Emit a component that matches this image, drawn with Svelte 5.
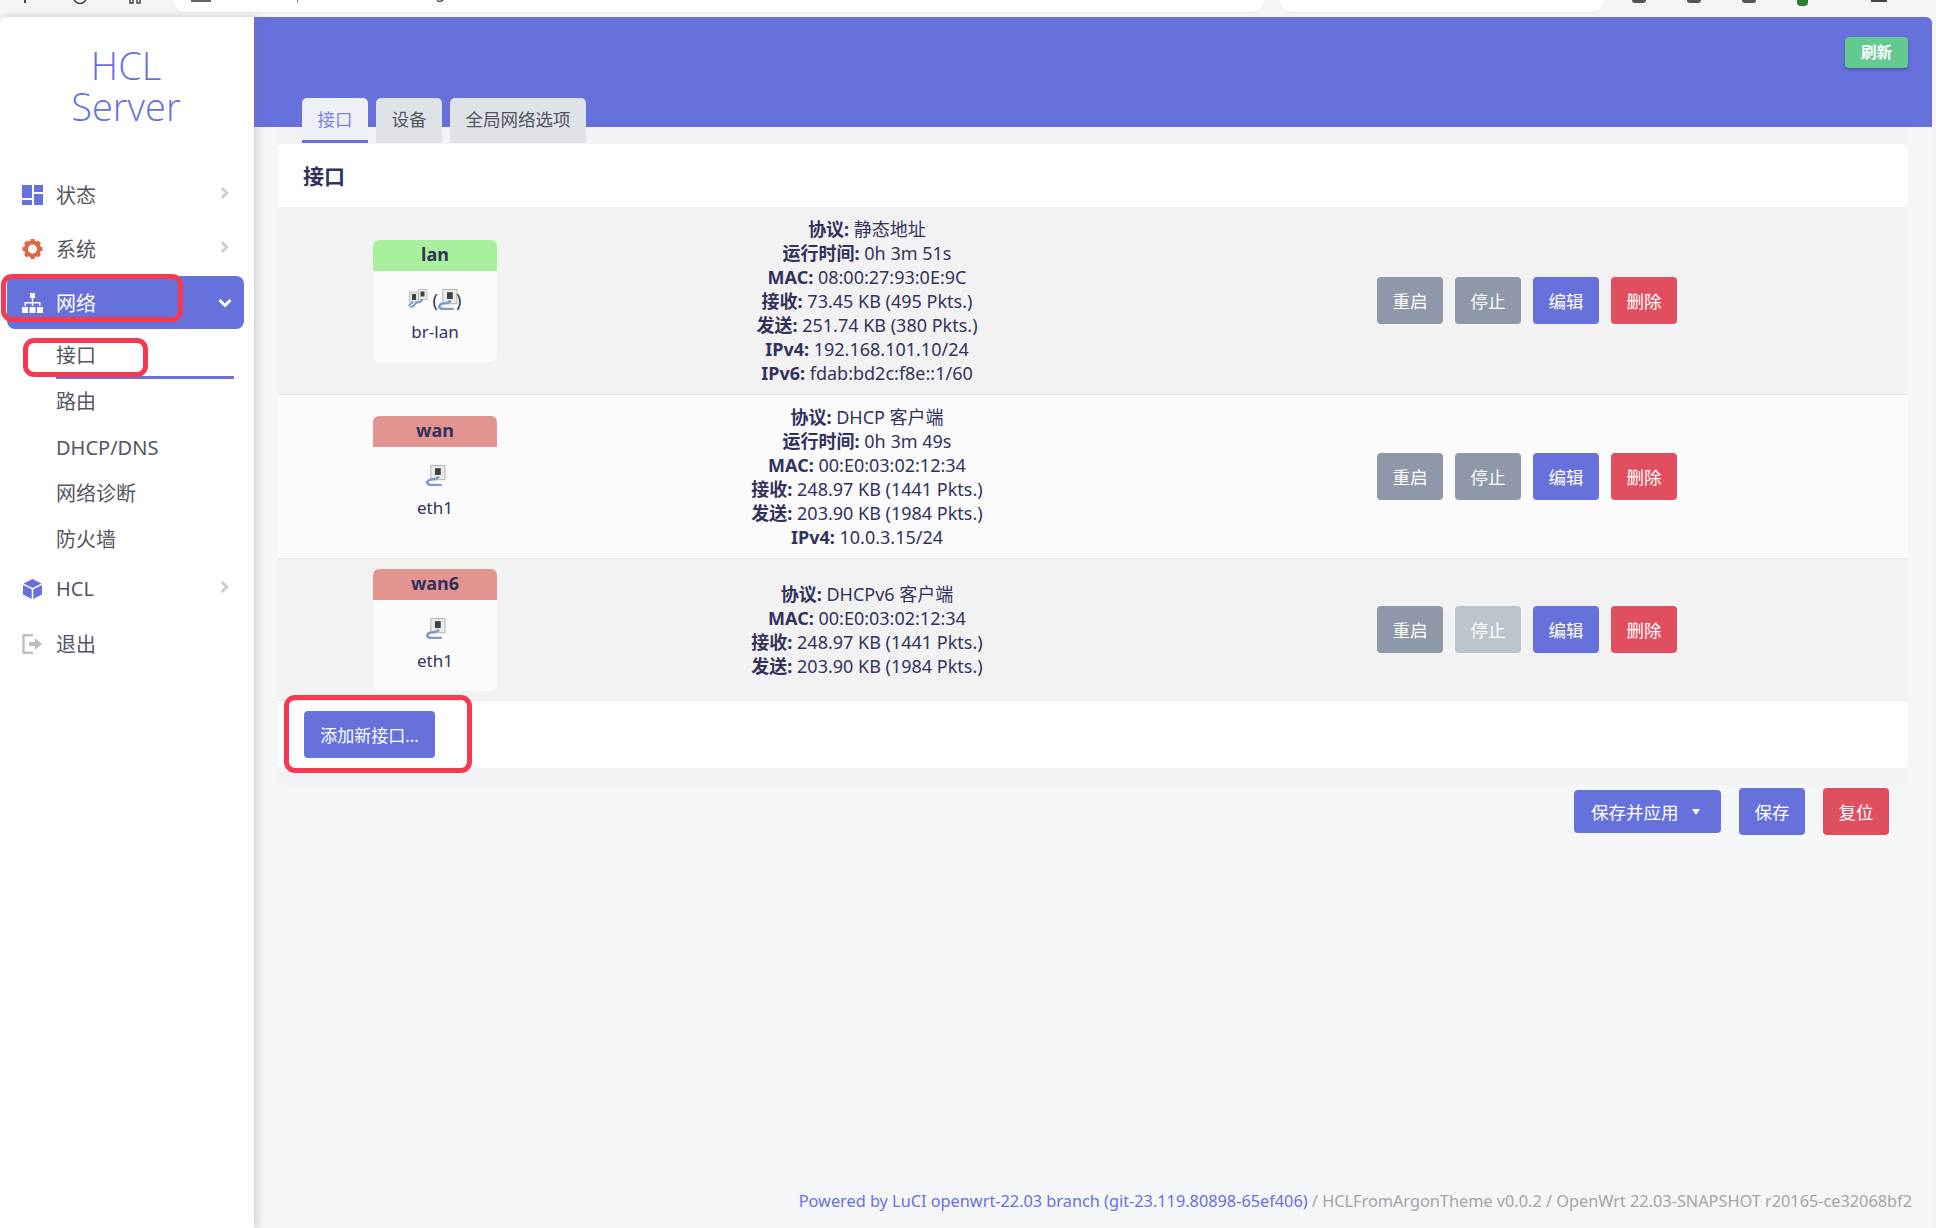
<script>
  const rows = [
    { name: 'lan', state: 'up', dev: 'br-lan', bridge: true, stopOff: false, info: [['协议:', '静态地址'], ['运行时间:', '0h 3m 51s'], ['MAC:', '08:00:27:93:0E:9C'], ['接收:', '73.45 KB (495 Pkts.)'], ['发送:', '251.74 KB (380 Pkts.)'], ['IPv4:', '192.168.101.10/24'], ['IPv6:', 'fdab:bd2c:f8e::1/60']] },
    { name: 'wan', state: 'down', dev: 'eth1', bridge: false, stopOff: false, info: [['协议:', 'DHCP 客户端'], ['运行时间:', '0h 3m 49s'], ['MAC:', '00:E0:03:02:12:34'], ['接收:', '248.97 KB (1441 Pkts.)'], ['发送:', '203.90 KB (1984 Pkts.)'], ['IPv4:', '10.0.3.15/24']] },
    { name: 'wan6', state: 'down', dev: 'eth1', bridge: false, stopOff: true, info: [['协议:', 'DHCPv6 客户端'], ['MAC:', '00:E0:03:02:12:34'], ['接收:', '248.97 KB (1441 Pkts.)'], ['发送:', '203.90 KB (1984 Pkts.)']] }
  ];
  const teeth = [0, 45, 90, 135, 180, 225, 270, 315];
  const subs = ['接口', '路由', 'DHCP/DNS', '网络诊断', '防火墙'];
</script>

{#snippet port()}
  <svg class="port" viewBox="0 0 20 20" aria-hidden="true">
    <rect x="5.500" y=".5" width="13.500" height="13.500" fill="#e9ece9" stroke="#b4b9b4" stroke-width="1" />
    <rect x="9.500" y="3" width="5.500" height="6.500" fill="#3f443f" />
    <path d="M13 11C11 15.500 6 12 3 15c-2 2 0 4 3 4h10" fill="none" stroke="#8199c9" stroke-width="2.400" />
  </svg>
{/snippet}

{#snippet pair()}
  <svg class="pair" viewBox="0 0 20 20" aria-hidden="true">
    <rect x="10" y=".5" width="9" height="10" fill="#e9ece9" stroke="#b4b9b4" stroke-width=".8" />
    <rect x="12.500" y="2.500" width="4" height="5" fill="#3f443f" />
    <rect x="1.500" y="3" width="9" height="10" fill="#dfe3df" stroke="#b4b9b4" stroke-width=".8" />
    <rect x="4" y="5" width="4" height="6" fill="#3f443f" />
    <path d="M14 10c0 5-5 2-7 5-1 3-4 3-5 3M5 13c-3 2-4 3-4 4" fill="none" stroke="#8199c9" stroke-width="2" />
  </svg>
{/snippet}

{#snippet chevron()}
  <svg class="chev" viewBox="0 0 10 14" aria-hidden="true"><path d="M2 1.500 7.500 7 2 12.500" fill="none" stroke="#c9cdd3" stroke-width="3" /></svg>
{/snippet}

<div class="app">
  <div class="chrome">
    <div class="tools">
      <svg class="tool" viewBox="0 0 20 20" aria-hidden="true"><path d="M10 0v3" stroke="#444" stroke-width="2" /></svg>
      <svg class="tool" viewBox="0 0 20 20" aria-hidden="true"><circle cx="10" cy="-3" r="6.500" fill="none" stroke="#444" stroke-width="1.500" /></svg>
      <svg class="tool" viewBox="0 0 20 20" aria-hidden="true"><path d="M5 0v3h3V0M12 0v3h3V0" fill="none" stroke="#444" stroke-width="1.500" /></svg>
    </div>
    <div class="addr">
      <span class="lock"></span>
      <span class="url-a">不安全</span><span class="pipe"></span><span class="url">192.168.101.10/cgi-bin/luci/admin/network/network</span>
    </div>
    <div class="search"><span>点击搜索</span></div>
    <div class="ext">
      <span class="dot"></span><span class="dot"></span><span class="dot"></span><span class="dot green"></span><span class="dash"></span>
    </div>
  </div>

  <div class="layout">
    <aside class="side">
      <div class="logo">HCL<br />Server</div>
      <nav>
        <div class="item">
          <svg class="ico" viewBox="0 0 21 20" aria-hidden="true"><path fill="#6771dc" d="M0 0h10v13H0zM12 0h9v7h-9zM0 15h10v5H0zM12 9h9v11h-9z" /></svg>
          <span>状态</span>{@render chevron()}
        </div>
        <div class="item">
          <svg class="ico" viewBox="0 0 21 20" aria-hidden="true">
            <circle cx="10.500" cy="10" r="6.500" fill="none" stroke="#e0673f" stroke-width="4" />
            {#each teeth as t}<rect x="8.500" y="0" width="4" height="4" fill="#e0673f" transform="rotate({t} 10.500 10)" />{/each}
          </svg>
          <span>系统</span>{@render chevron()}
        </div>
        <div class="item active">
          <svg class="ico" viewBox="0 0 21 20" aria-hidden="true"><path fill="#fff" d="M8 0h5v5H8zM9.800 5h1.400v4h7.300v4h-1.400v-2.600h-5.900V13H9.800v-2.600H3.900V13H2.500V9h7.300zM0 14h6v6H0zM7.500 14h6v6h-6zM15 14h6v6h-6z" /></svg>
          <span>网络</span>
          <svg class="chev down" viewBox="0 0 14 10" aria-hidden="true"><path d="M1.500 2 7 7.500 12.500 2" fill="none" stroke="#fff" stroke-width="3" /></svg>
        </div>
        <div class="subs">
          {#each subs as s, i}
            <div class="sub" class:current={i === 0}>{s}</div>
          {/each}
        </div>
        <div class="item">
          <svg class="ico" viewBox="0 0 21 20" aria-hidden="true"><path fill="#6771dc" d="M10.500 0 19.500 4.500 10.500 9 1.500 4.500zM1 6l8.700 4.300V20L1 15.500zM20 6v9.500L11.300 20v-9.700z" /></svg>
          <span>HCL</span>{@render chevron()}
        </div>
        <div class="item last">
          <svg class="ico" viewBox="0 0 21 20" aria-hidden="true"><path d="M11 1.200H1.500v17.600H11" fill="none" stroke="#b9c0c6" stroke-width="2.400" /><path d="M7 8h6V4l7 6-7 6v-4H7z" fill="#b9c0c6" /></svg>
          <span>退出</span>
        </div>
      </nav>
    </aside>

    <main class="main">
      <header class="hero"><button class="refresh">刷新</button></header>
      <div class="panel">
        <div class="tabs">
          <div class="tab on">接口</div>
          <div class="tab">设备</div>
          <div class="tab">全局网络选项</div>
        </div>
        <section class="card">
          <h3>接口</h3>
          {#each rows as r}
            <div class="row">
              <div class="dev-cell">
                <div class="dev">
                  <div class="dev-name {r.state}">{r.name}</div>
                  <div class="dev-body">
                    <div class="ports">
                      {#if r.bridge}
                        {@render pair()}<span class="paren">(</span>{@render port()}<span class="paren close">)</span>
                      {:else}
                        {@render port()}
                      {/if}
                    </div>
                    <div class="dev-label">{r.dev}</div>
                  </div>
                </div>
              </div>
              <div class="info">
                {#each r.info as l}
                  <div><b>{l[0]}</b> {l[1]}</div>
                {/each}
              </div>
              <div class="acts">
                <button class="btn gray">重启</button>
                <button class="btn gray" class:off={r.stopOff}>停止</button>
                <button class="btn blue">编辑</button>
                <button class="btn red">删除</button>
              </div>
            </div>
          {/each}
          <div class="add"><button class="btn blue wide">添加新接口...</button></div>
        </section>
      </div>
      <div class="page-acts">
        <button class="btn blue apply">保存并应用<i class="caret"></i></button>
        <button class="btn blue">保存</button>
        <button class="btn red">复位</button>
      </div>
      <footer class="foot"><span class="lnk">Powered by LuCI openwrt-22.03 branch (git-23.119.80898-65ef406)</span> / HCLFromArgonTheme v0.0.2 / OpenWrt 22.03-SNAPSHOT r20165-ce32068bf2</footer>
    </main>
    <div class="edge"></div>
  </div>

  <div class="mark m1"></div>
  <div class="mark m2"></div>
  <div class="mark m3"></div>
</div>

<style>
  :global(body) { margin: 0; background: #f5f5f5; }
  .app {
    position: relative;
    width: 1936px;
    height: 1228px;
    overflow: hidden;
    display: flex;
    flex-direction: column;
    font-family: "Noto Sans", "Noto Sans CJK SC", sans-serif;
    color: #32325d;
  }
  .chrome { height: 17px; flex: none; display: flex; overflow: hidden; background: #f5f5f5; }
  .tools { width: 173px; display: flex; gap: 35px; padding-left: 15px; box-sizing: border-box; }
  .tool { width: 20px; height: 20px; }
  .addr, .search { height: 12px; background: #fff; border-radius: 0 0 12px 12px; display: flex; align-items: flex-end; box-shadow: 0 1px 1px #e8e8e8; }
  .addr { width: 1091px; padding-left: 18px; box-sizing: border-box; font-size: 16px; line-height: 22px; white-space: nowrap; color: #444; }
  .addr > span { flex: none; height: 22px; transform: translateY(-9px); }
  .addr > .lock { width: 20px; background: #666; transform: translateY(-10px); }
  .url-a { margin-left: 14px; width: 62px; }
  .pipe { width: 1px; background: #888; margin: 0 10px 0 10px; }
  .search { width: 324px; margin-left: 16px; padding-left: 58px; box-sizing: border-box; font-size: 16px; color: #555; overflow: hidden; }
  .search span { transform: translateY(-9px); line-height: 22px; white-space: nowrap; }
  .ext { flex: 1; display: flex; gap: 41px; padding-left: 28px; }
  .dot { width: 14px; height: 3px; background: #555; border-radius: 0 0 4px 4px; }
  .dot.green { width: 11px; height: 6px; background: #2e7d32; }
  .dash { width: 16px; height: 2px; background: #444; margin-left: 22px; }

  .layout { flex: 1; display: flex; min-height: 0; }
  .side {
    width: 254px;
    flex: none;
    background: #fff;
    border-top-left-radius: 6px;
    box-shadow: 2px 0 8px rgba(110, 115, 130, .35);
    position: relative;
    z-index: 1;
    color: #55555f;
  }
  .logo {
    height: 151px;
    box-sizing: border-box;
    padding-top: 28px;
    padding-right: 2px;
    text-align: center;
    font-family: "Open Sans", "Noto Sans", sans-serif;
    font-weight: 300;
    font-size: 38px;
    line-height: 41px;
    color: #6771dc;
  }
  .item {
    height: 53px;
    margin: 0 10px 1px 7px;
    padding: 0 15px 0 15px;
    display: flex;
    align-items: center;
    font-size: 20px;
    border-radius: 8px;
  }
  .item.active { background: #6771dc; color: #fff; margin-bottom: 0; padding-right: 12px; }
  .item.last { margin-top: 2px; }
  .item span { flex: 1; }
  .ico { width: 21px; height: 20px; margin-right: 13px; flex: none; }
  .chev { width: 9px; height: 14px; flex: none; margin-top: -3px; }
  .chev.down { width: 14px; height: 10px; margin-top: 0; }
  .subs { padding-top: 4px; margin-bottom: -1px; }
  .sub { height: 46px; margin: 0 20px 0 56px; line-height: 45px; font-size: 20px; }
  .sub.current { border-bottom: 3px solid #6771dc; height: 43px; }

  .main { flex: 1; min-width: 0; background: #f4f6f8; display: flex; flex-direction: column; }
  .hero {
    height: 110px;
    flex: none;
    background: #6771dc;
    border-top-right-radius: 6px;
    display: flex;
    justify-content: flex-end;
    align-items: flex-start;
    padding: 20px 24px 0 0;
    box-sizing: border-box;
  }
  .refresh {
    width: 63px;
    height: 31px;
    border: 0;
    padding: 0 0 2px;
    border-radius: 4px;
    background: #63c98f;
    color: #fff;
    font: 600 15.500px "Noto Sans", "Noto Sans CJK SC", sans-serif;
    box-shadow: 0 2px 3px rgba(30, 40, 90, .35);
  }
  .panel { margin: 0 24px; padding-bottom: 17px; background: #f2f3f6; border-radius: 0 0 8px 8px; display: flow-root; }
  .tabs { display: flex; gap: 8px; margin: -29px 0 1px 24px; height: 45px; }
  .tab {
    padding: 0 15.500px;
    background: #dfe2e7;
    border-radius: 5px 5px 0 0;
    font-size: 17.500px;
    line-height: 42px;
    color: #525560;
  }
  .tab.on { background: #eef0f5; color: #7a83e0; border-bottom: 3px solid #6771dc; height: 42px; }
  .card { background: #fff; border-radius: 5px; overflow: hidden; }
  h3 {
    margin: 0;
    height: 63px;
    padding-left: 25px;
    font-size: 21px;
    font-weight: 700;
    line-height: 65px;
    color: #32325d;
  }
  .row {
    display: grid;
    grid-template-columns: 314px 550px 1fr;
    align-items: center;
    padding: 10px 0 9px;
    background: #f2f2f3;
    border-bottom: 1px solid #e9e9ea;
    box-sizing: border-box;
  }
  .row:nth-of-type(even) { background: #fbfbfc; }
  .row:last-of-type { border-bottom: 0; padding-bottom: 10px; }
  .dev { width: 124px; margin: 0 auto; border-radius: 6px; overflow: hidden; background: #fbfbfc; text-align: center; }
  .dev-name { height: 31px; font-size: 18px; font-weight: 700; line-height: 29px; }
  .dev-name.up { background: #a8f09c; }
  .dev-name.down { background: #e29590; }
  .dev-body { height: 91px; padding-top: 16px; box-sizing: border-box; }
  .ports { height: 24px; display: flex; justify-content: center; align-items: center; }
  .port { width: 21px; height: 21px; flex: none; }
  .pair { width: 20px; height: 20px; flex: none; margin-left: -1px; }
  .paren { font-size: 18px; line-height: 21px; margin: 3px -1px 0 5px; }
  .paren.close { margin: 3px 0 0 -2px; }
  .dev-label { font-size: 17px; line-height: 24px; margin-top: 9px; }
  .info { text-align: center; font-size: 18px; line-height: 24px; }
  .info b { font-weight: 700; }
  .acts { display: flex; gap: 12px; padding-left: 235px; margin-top: -2px; }
  .row:last-of-type .acts { margin-top: 0; }
  .btn {
    width: 66px;
    height: 47px;
    padding: 0;
    border: 0;
    border-radius: 4px;
    font: 400 17.500px "Noto Sans", "Noto Sans CJK SC", sans-serif;
    color: #fff;
    flex: none;
  }
  .gray { background: #8f98a9; }
  .gray.off { background: #bcc4cc; }
  .blue { background: #6771dc; }
  .red { background: #e04f5f; }
  .add { height: 67px; padding: 10px 0 0 26px; box-sizing: border-box; }
  .wide { width: 131px; font-size: 17px; }
  .page-acts { display: flex; justify-content: flex-end; align-items: center; gap: 18px; margin-top: 3px; padding-right: 43px; }
  .apply { width: 147px; height: 43px; display: flex; align-items: center; justify-content: flex-start; padding-left: 17px; box-sizing: border-box; }
  .caret { width: 0; height: 0; margin-left: 13px; border: 4px solid transparent; border-top: 6px solid #fff; border-bottom: 0; }
  .foot { margin-top: auto; padding: 0 20px 15px 0; text-align: right; font-size: 16.300px; line-height: 24px; color: #a3a5a9; white-space: nowrap; }
  .lnk { color: #6771dc; }
  .edge { width: 4px; flex: none; background: #f5f5f5; }

  .mark { position: absolute; box-sizing: border-box; border: 5px solid #f7394f; border-radius: 11px; z-index: 2; }
  .m1 { left: 1px; top: 274px; width: 182px; height: 48px; }
  .m2 { left: 23px; top: 338px; width: 125px; height: 39px; }
  .m3 { left: 284px; top: 695px; width: 188px; height: 78px; }
</style>
